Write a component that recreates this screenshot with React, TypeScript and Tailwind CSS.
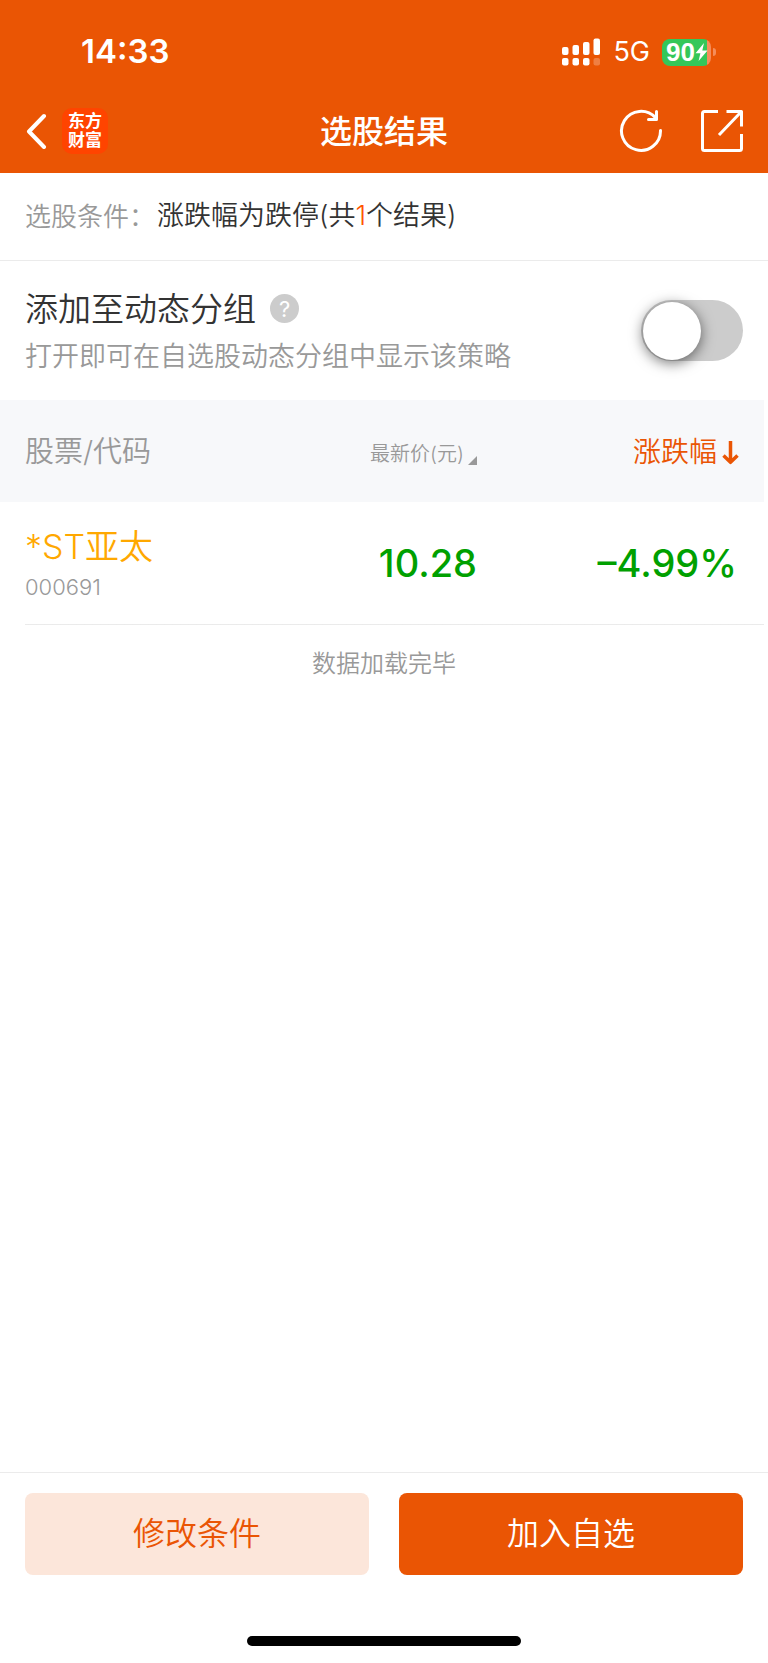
import { useState } from 'react';

interface Stock {
  name: string;
  code: string;
  price: string;
  change: string;
}

const stocks: Stock[] = [
  { name: '*ST亚太', code: '000691', price: '10.28', change: '–4.99%' },
];

function StatusBar() {
  return (
    <div className="flex h-[102px] items-center justify-between pl-[81px] pr-[52px] pt-[2px]">
      <span className="text-[33px] font-semibold">14:33</span>
      <div className="flex items-center">
        <svg width="39" height="28" viewBox="0 0 39 28" fill="currentColor" aria-hidden="true">
          <rect x="0" y="9" width="6.5" height="8" rx="2" />
          <rect x="10.5" y="7" width="6.5" height="10" rx="2" />
          <rect x="21" y="4" width="6.5" height="13" rx="2" />
          <rect x="31.5" y="0.5" width="6.5" height="16.5" rx="2" />
          <rect x="0" y="20" width="6.5" height="7.5" rx="2" />
          <rect x="10.5" y="20" width="6.5" height="7.5" rx="2" />
          <rect x="21" y="20" width="6.5" height="7.5" rx="2" />
          <rect x="31.5" y="20" width="6.5" height="7.5" rx="2" opacity="0.25" />
        </svg>
        <span className="ml-3 text-[27px] font-normal">5G</span>
        <div className="ml-3 flex items-center gap-[2px]">
          <div className="flex h-[27px] w-[49px] items-center rounded-lg bg-linear-to-r from-[#34c759] from-92% to-[#f58d5a] to-92% pl-[4px]">
            <span className="font-['Liberation_Sans',sans-serif] text-[26px] font-bold leading-none">90</span>
            <svg width="13" height="18" viewBox="0 0 13 18" fill="currentColor" aria-hidden="true">
              <path d="M9 0 0.5 10.2H5.4L3.6 18 12.5 7.4H7.3Z" />
            </svg>
          </div>
          <span className="h-[8px] w-[3px] rounded-r-full bg-[#f58d5a]" />
        </div>
      </div>
    </div>
  );
}

function NavBar() {
  return (
    <div className="grid h-[71px] grid-cols-[1fr_auto_1fr] items-start px-[25px] pt-[4px]">
      <div className="flex h-[50px] items-center">
        <button type="button" aria-label="返回" className="mr-[14px]">
          <svg width="23" height="36" viewBox="0 0 23 36" fill="none" stroke="currentColor" strokeWidth="4" strokeLinecap="round" strokeLinejoin="round">
            <path d="M19 3 4 18.5 19 34" />
          </svg>
        </button>
        <a
          href="#"
          className="flex h-[46px] w-[46px] flex-col items-center justify-center rounded-[10px] bg-[#ff4400] text-[17px] font-bold leading-[19px]"
        >
          <span>东方</span>
          <span>财富</span>
        </a>
      </div>
      <h1 className="text-[32px] font-medium leading-[52px]">选股结果</h1>
      <div className="flex h-[50px] items-center justify-end gap-[38px]">
        <button type="button" aria-label="刷新">
          <svg width="44" height="44" viewBox="0 0 44 44" fill="none" stroke="currentColor" strokeWidth="3" strokeLinecap="round" strokeLinejoin="round">
            <path d="M41.5 21.5A19.5 19.5 0 1 1 36.5 8.8" />
            <path d="M37.5 2.500V10.500H29.500" />
          </svg>
        </button>
        <button type="button" aria-label="分享">
          <svg width="42" height="42" viewBox="0 0 42 42" fill="none" stroke="currentColor" strokeWidth="3" strokeLinejoin="round">
            <path d="M17 1.5H3.5Q1.5 1.5 1.5 3.5V38.5Q1.5 40.5 3.5 40.5H38.5Q40.5 40.5 40.5 38.5V24" />
            <path d="M25.5 1.5H40.5V16.5M40 2 18 25" />
          </svg>
        </button>
      </div>
    </div>
  );
}

function GroupToggle() {
  const [enabled, setEnabled] = useState(false);

  return (
    <section className="flex h-[139px] items-center justify-between px-[25px]">
      <div>
        <div className="flex items-center gap-[14px]">
          <label htmlFor="dynamic-group" className="text-[33px] leading-[52px] text-[#333]">
            添加至动态分组
          </label>
          <button
            type="button"
            aria-label="说明"
            className="flex h-[29px] w-[29px] items-center justify-center rounded-full bg-[#ccc] text-[22px] font-normal leading-none text-white"
          >
            ?
          </button>
        </div>
        <p className="text-[27px] leading-[44px] text-[#999]">打开即可在自选股动态分组中显示该策略</p>
      </div>
      <input
        id="dynamic-group"
        type="checkbox"
        role="switch"
        checked={enabled}
        onChange={(e) => setEnabled(e.target.checked)}
        className="flex h-[61px] w-[102px] shrink-0 cursor-pointer appearance-none items-center rounded-full bg-[#ccc] px-[2px] before:h-[58px] before:w-[58px] before:rounded-full before:bg-white before:shadow-[0_3px_14px_rgba(0,0,0,0.55)] before:content-[''] checked:justify-end checked:bg-[#ea5504]"
      />
    </section>
  );
}

function StockTable() {
  return (
    <table className="w-full table-fixed border-collapse">
      <thead>
        <tr className="h-[102px] bg-[#f7f8fa] text-[28px] text-[#999]">
          <th scope="col" className="pl-[25px] pt-[2px] text-left text-[29px] font-[350]">股票/代码</th>
          <th scope="col" className="w-[240px] text-right font-[350]">
            <button type="button" className="inline-flex items-center gap-[4px] text-[20px]">
              最新价(元)
              <svg width="9" height="9" viewBox="0 0 9 9" fill="currentColor" className="mt-3" aria-hidden="true">
                <path d="M9 0V9H0Z" />
              </svg>
            </button>
          </th>
          <th scope="col" className="w-[287px] pr-[25px] pt-[2px] text-right font-[350]">
            <button type="button" className="inline-flex items-center gap-[5px] text-[#ea5504]">
              涨跌幅
              <svg width="17" height="25" viewBox="0 0 17 25" fill="none" stroke="currentColor" strokeWidth="3.5" strokeLinejoin="round" aria-hidden="true">
                <path d="M8.5 1V22M1.5 15.5 8.5 22.3 15.5 15.5" />
              </svg>
            </button>
          </th>
        </tr>
      </thead>
      <tbody>
        {stocks.map((stock) => (
          <tr
            key={stock.code}
            className="h-[123px] bg-linear-to-r from-transparent from-[25px] to-[#ebebeb] to-[25px] bg-[length:100%_1px] bg-bottom bg-no-repeat"
          >
            <td className="pl-[25px]">
              <div className="text-[34px] leading-[46px] text-[#ffa800]">{stock.name}</div>
              <div className="text-[22px] leading-[34px] text-[#999]">{stock.code}</div>
            </td>
            <td className="text-right text-[38px] font-medium text-[#00a000]">{stock.price}</td>
            <td className="pr-[27px] text-right text-[38px] font-medium text-[#00a000]">{stock.change}</td>
          </tr>
        ))}
      </tbody>
    </table>
  );
}

export default function App() {
  return (
    <div className="flex min-h-screen flex-col bg-white font-['Inter','Noto_Sans_CJK_SC',sans-serif] font-[350]">
      <header className="bg-[#ea5504] text-white">
        <StatusBar />
        <NavBar />
      </header>

      <main className="flex-1">
        <p className="flex h-[88px] items-center border-b border-[#ebebeb] px-[25px] text-[27px] text-[#333]">
          <span className="w-[132px] whitespace-nowrap text-[26px] text-[#999]">{'选股条件\uFF1A'}</span>
          <span>
            涨跌幅为跌停(共<span className="text-[#ff5500]">1</span>个结果)
          </span>
        </p>
        <GroupToggle />
        <div className="pr-1">
          <StockTable />
        </div>
        <p className="pt-[20px] text-center text-[24px] leading-[38px] text-[#999]">数据加载完毕</p>
      </main>

      <footer className="border-t border-[#ebebeb] px-[25px] pb-[17px] pt-5">
        <div className="grid grid-cols-2 gap-[30px] text-[32px]">
          <button type="button" className="h-[82px] rounded-lg bg-[#fce6da] text-[#ea5504]">
            修改条件
          </button>
          <button type="button" className="h-[82px] rounded-lg bg-[#ea5504] text-white">
            加入自选
          </button>
        </div>
        <div className="mx-auto mt-[61px] h-[10px] w-[274px] rounded-full bg-black" />
      </footer>
    </div>
  );
}
